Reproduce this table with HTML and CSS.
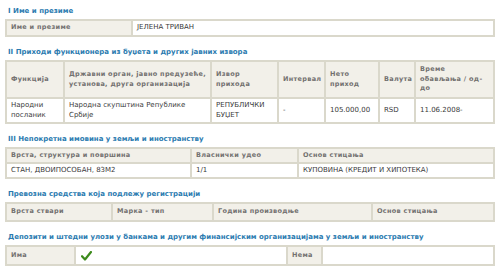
FILE: index.html
```html
<!DOCTYPE html>
<html lang="sr">
<head>
<meta charset="utf-8">
<link rel="stylesheet" href="styles.css">
</head>
<body>
<div class="page">
  <section class="sec">
    <h2 class="title">I Име и презиме</h2>
    <table class="grid">
      <colgroup><col style="width:126px"><col></colgroup>
      <tr class="r16"><th>Име и презиме</th><td>ЈЕЛЕНА ТРИВАН</td></tr>
    </table>
  </section>

  <section class="sec">
    <h2 class="title">II Приходи функционера из буџета и других јавних извора</h2>
    <table class="grid">
      <colgroup>
        <col style="width:58px"><col style="width:147px"><col style="width:67px"><col style="width:47px"><col style="width:54px"><col style="width:36px"><col>
      </colgroup>
      <tr class="hrow"><th>Функција</th><th>Државни орган, јавно предузеће,<br>установа, друга организација</th><th>Извор<br>прихода</th><th>Интервал</th><th>Нето<br>приход</th><th>Валута</th><th>Време<br>обављања / од-<br>до</th></tr>
      <tr class="drow"><td>Народни посланик</td><td>Народна скупштина Републике Србије</td><td>РЕПУБЛИЧКИ БУЏЕТ</td><td>-</td><td>105.000,00</td><td>RSD</td><td>11.06.2008-</td></tr>
    </table>
  </section>

  <section class="sec">
    <h2 class="title">III Непокретна имовина у земљи и иностранству</h2>
    <table class="grid">
      <colgroup><col style="width:185px"><col style="width:107px"><col></colgroup>
      <tr class="r15"><th>Врста, структура и површина</th><th>Власнички удео</th><th>Основ стицања</th></tr>
      <tr class="r15"><td>СТАН, ДВОИПОСОБАН, 83М2</td><td>1/1</td><td>КУПОВИНА (КРЕДИТ И ХИПОТЕКА)</td></tr>
    </table>
  </section>

  <section class="sec">
    <h2 class="title">Превозна средства која подлежу регистрацији</h2>
    <table class="grid">
      <colgroup><col style="width:106px"><col style="width:101px"><col style="width:159px"><col></colgroup>
      <tr class="r18"><th>Врста ствари</th><th>Марка - тип</th><th>Година производње</th><th>Основ стицања</th></tr>
    </table>
  </section>

  <section class="sec">
    <h2 class="title">Депозити и штедни улози у банкама и другим финансијским организацијама у земљи и иностранству</h2>
    <table class="grid">
      <colgroup><col style="width:69px"><col style="width:212px"><col style="width:35px"><col></colgroup>
      <tr class="r20"><th>Има</th><td class="chk"><svg width="11" height="10" viewBox="0 0 11 10"><path d="M1 5.2 L4 8.5 L10 1" fill="none" stroke="#3d8b1c" stroke-width="2.2" stroke-linecap="round" stroke-linejoin="round"/></svg></td><th>Нема</th><td></td></tr>
    </table>
  </section>
</div>
</body>
</html>
```

FILE: styles.css
```css
html, body {
  margin: 0;
  padding: 0;
  background: #ffffff;
}
body {
  font-family: "DejaVu Sans", Verdana, sans-serif;
  font-size: 7px;
  color: #333333;
}
.page {
  padding: 7px 5px 0 5px;
  display: flex;
  flex-direction: column;
  gap: 11px;
}
.sec {
  display: flex;
  flex-direction: column;
  gap: 3px;
}
.title {
  margin: 0;
  padding-left: 3px;
  font-size: 7px;
  font-weight: bold;
  color: #2b7bb0;
  line-height: 9px;
}
.grid {
  width: 490px;
  border-collapse: collapse;
  table-layout: fixed;
}
.grid th, .grid td {
  border: 2px solid #dad8cb;
  padding: 0 4px;
  text-align: left;
  vertical-align: middle;
  line-height: 9.5px;
  font-size: 7px;
}
.grid th {
  background: #f2f0e9;
  font-weight: bold;
  font-size: 6.5px;
  color: #737170;
  letter-spacing: 0.3px;
}
.grid td {
  background: #ffffff;
  color: #3a3a3a;
}
.r16 { height: 16px; }
.r15 { height: 15px; }
.r18 { height: 18px; }
.r20 { height: 19px; }
.hrow { height: 37px; }
.drow { height: 25px; }
.chk svg { display: block; margin-left: 1px; }
```
